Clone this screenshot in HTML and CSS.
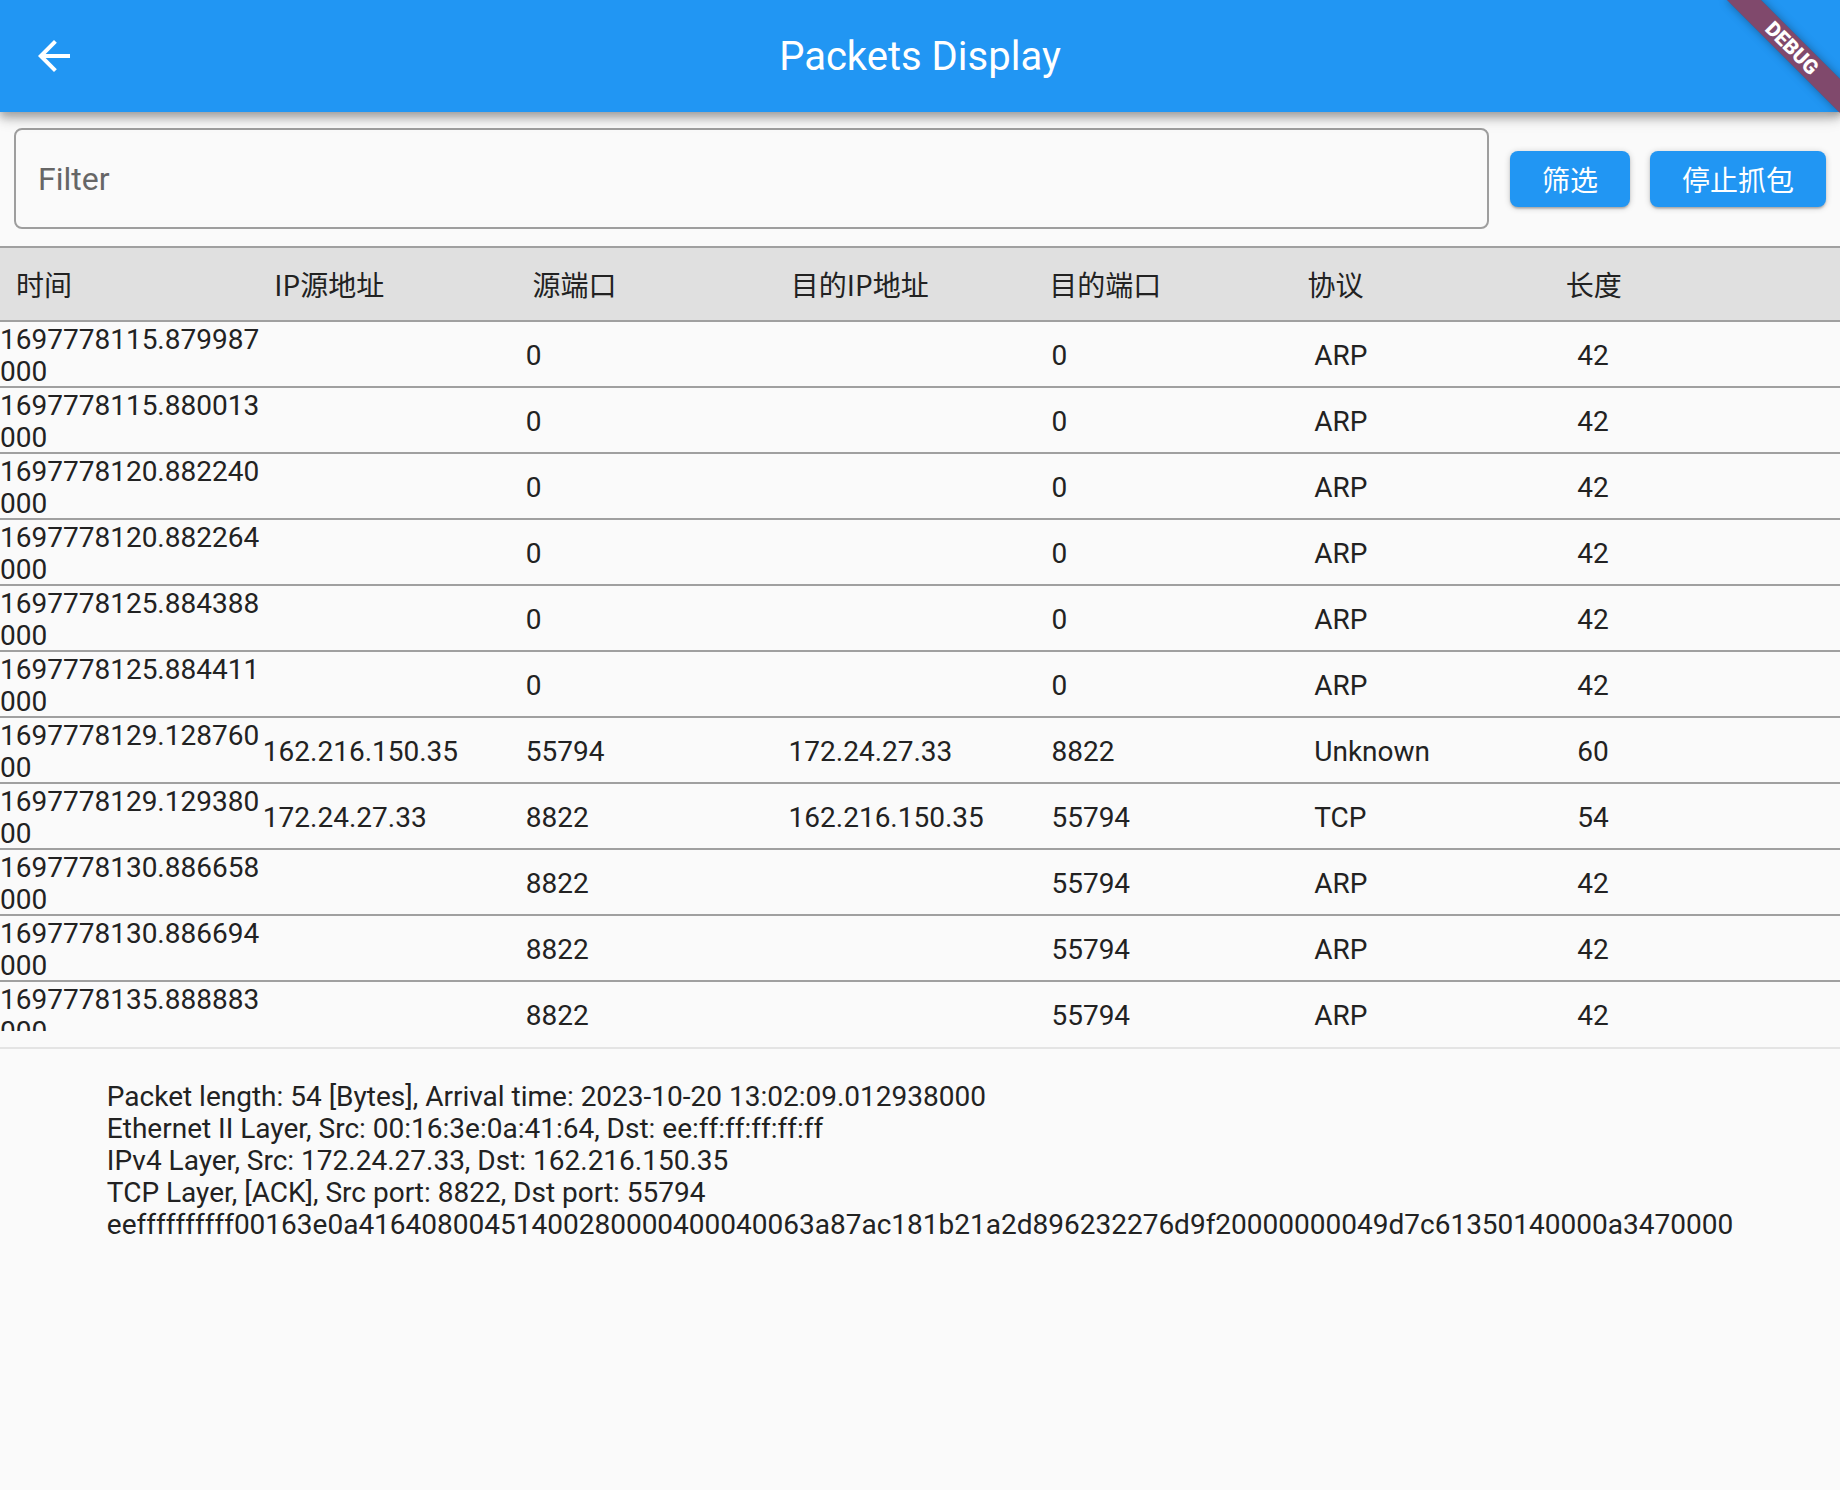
FILE: index.html
```html
<!DOCTYPE html>
<html lang="zh">
<head>
<meta charset="utf-8">
<title>Packets Display</title>
<link rel="stylesheet" href="styles.css">
</head>
<body>
<div class="app">
  <header class="appbar">
    <button class="back" aria-label="Back">
      <svg viewBox="0 0 24 24" width="48" height="48"><path fill="#ffffff" d="M20 11H7.83l5.59-5.59L12 4l-8 8 8 8 1.41-1.41L7.83 13H20v-2z"/></svg>
    </button>
    <h1 class="title">Packets Display</h1>
    <span class="spacer"></span>
  </header>

  <div class="toolbar">
    <input class="filter" type="text" placeholder="Filter">
    <button class="btn">筛选</button>
    <button class="btn">停止抓包</button>
  </div>

  <div class="thead">
    <div>时间</div><div>IP源地址</div><div>源端口</div><div>目的IP地址</div><div>目的端口</div><div>协议</div><div>长度</div>
  </div>

  <div class="list">
    <div class="row"><div class="time">1697778115.879987000</div><div></div><div>0</div><div></div><div>0</div><div>ARP</div><div>42</div></div>
    <div class="row"><div class="time">1697778115.880013000</div><div></div><div>0</div><div></div><div>0</div><div>ARP</div><div>42</div></div>
    <div class="row"><div class="time">1697778120.882240000</div><div></div><div>0</div><div></div><div>0</div><div>ARP</div><div>42</div></div>
    <div class="row"><div class="time">1697778120.882264000</div><div></div><div>0</div><div></div><div>0</div><div>ARP</div><div>42</div></div>
    <div class="row"><div class="time">1697778125.884388000</div><div></div><div>0</div><div></div><div>0</div><div>ARP</div><div>42</div></div>
    <div class="row"><div class="time">1697778125.884411000</div><div></div><div>0</div><div></div><div>0</div><div>ARP</div><div>42</div></div>
    <div class="row"><div class="time">1697778129.12876000</div><div>162.216.150.35</div><div>55794</div><div>172.24.27.33</div><div>8822</div><div>Unknown</div><div>60</div></div>
    <div class="row"><div class="time">1697778129.12938000</div><div>172.24.27.33</div><div>8822</div><div>162.216.150.35</div><div>55794</div><div>TCP</div><div>54</div></div>
    <div class="row"><div class="time">1697778130.886658000</div><div></div><div>8822</div><div></div><div>55794</div><div>ARP</div><div>42</div></div>
    <div class="row"><div class="time">1697778130.886694000</div><div></div><div>8822</div><div></div><div>55794</div><div>ARP</div><div>42</div></div>
    <div class="row"><div class="time">1697778135.888883000</div><div></div><div>8822</div><div></div><div>55794</div><div>ARP</div><div>42</div></div>
  </div>

  <div class="divider"></div>

  <div class="detail">
    <div class="detail-text">
      <div>Packet length: 54 [Bytes], Arrival time: 2023-10-20 13:02:09.012938000</div>
      <div>Ethernet II Layer, Src: 00:16:3e:0a:41:64, Dst: ee:ff:ff:ff:ff:ff</div>
      <div>IPv4 Layer, Src: 172.24.27.33, Dst: 162.216.150.35</div>
      <div>TCP Layer, [ACK], Src port: 8822, Dst port: 55794</div>
      <div>eeffffffffff00163e0a41640800451400280000400040063a87ac181b21a2d896232276d9f20000000049d7c61350140000a3470000</div>
    </div>
  </div>

  <div class="debug"><span>DEBUG</span></div>
</div>
</body>
</html>
```

FILE: styles.css
```css
* { box-sizing: border-box; }

html, body {
  margin: 0;
  padding: 0;
  width: 1840px;
  height: 1490px;
  overflow: hidden;
  background: #fafafa;
}

body {
  font-family: Roboto, "Noto Sans CJK SC", sans-serif;
  color: #212121;
}

.app {
  position: relative;
  width: 1840px;
  height: 1490px;
  overflow: hidden;
  background: #fafafa;
}

.appbar {
  position: relative;
  z-index: 2;
  height: 112px;
  background: #2196f3;
  display: grid;
  grid-template-columns: 1fr auto 1fr;
  align-items: center;
  box-shadow: 0 4px 8px rgba(0,0,0,0.2), 0 8px 10px rgba(0,0,0,0.14), 0 2px 20px rgba(0,0,0,0.12);
}

.back {
  justify-self: start;
  margin-left: 30px;
  width: 48px;
  height: 48px;
  padding: 0;
  border: 0;
  background: transparent;
  display: flex;
}

.title {
  margin: 0;
  font-family: Roboto, sans-serif;
  font-size: 40px;
  font-weight: 400;
  color: #ffffff;
  line-height: 1;
  padding-top: 2px;
}

.toolbar {
  display: flex;
  align-items: center;
  padding: 16px 14px 17px 14px;
  gap: 20px;
}

.filter {
  flex: 1;
  height: 101px;
  margin-right: 1px;
  border: 2px solid #9e9e9e;
  border-radius: 8px;
  background: transparent;
  padding: 0 22px;
  font-family: Roboto, sans-serif;
  font-size: 32px;
  color: #212121;
  outline: none;
}

.filter::placeholder {
  color: #666666;
}

.btn {
  height: 56px;
  padding: 0 32px;
  border: 0;
  border-radius: 8px;
  background: #2196f3;
  color: #ffffff;
  font-family: "Noto Sans CJK SC", Roboto, sans-serif;
  font-size: 28px;
  line-height: 1;
  box-shadow: 0 2px 2px rgba(0,0,0,0.14), 0 3px 2px -2px rgba(0,0,0,0.12), 0 1px 6px rgba(0,0,0,0.2);
}

.thead {
  display: grid;
  grid-template-columns: repeat(7, 1fr);
  align-items: center;
  height: 76px;
  padding: 0 16px;
  background: #e0e0e0;
  border-top: 2px solid #a0a0a0;
  border-bottom: 2px solid #a0a0a0;
  font-family: "Noto Sans CJK SC", Roboto, sans-serif;
  font-size: 28px;
  color: #222222;
  line-height: 32px;
}

.list {
  height: 709px;
  overflow: hidden;
}

.row {
  display: grid;
  grid-template-columns: repeat(7, 1fr);
  align-items: center;
  height: 66px;
  border-bottom: 2px solid #a0a0a0;
  font-size: 28px;
  line-height: 32px;
  color: #222222;
}

.row > div {
  min-width: 0;
  padding-top: 1px;
}

.row .time {
  word-break: break-all;
  align-self: start;
  padding-top: 2px;
}

.divider {
  height: 33px;
  display: flex;
  align-items: center;
  padding-top: 1px;
}

.divider::before {
  content: "";
  display: block;
  width: 100%;
  height: 2px;
  background: #e4e4e4;
}

.detail {
  display: flex;
  justify-content: center;
  padding-top: 17px;
}

.detail-text {
  font-size: 28px;
  line-height: 32px;
  color: #222222;
}

.debug {
  position: absolute;
  z-index: 5;
  left: 1712px;
  top: 36px;
  width: 160px;
  height: 24px;
  transform: rotate(45deg);
  background: rgba(183, 28, 28, 0.63);
  box-shadow: 0 0 10px rgba(0,0,0,0.35);
  display: flex;
  align-items: center;
  justify-content: center;
}

.debug span {
  font-family: Roboto, sans-serif;
  font-weight: 900;
  font-size: 20.4px;
  line-height: 1;
  color: #ffffff;
}
```
